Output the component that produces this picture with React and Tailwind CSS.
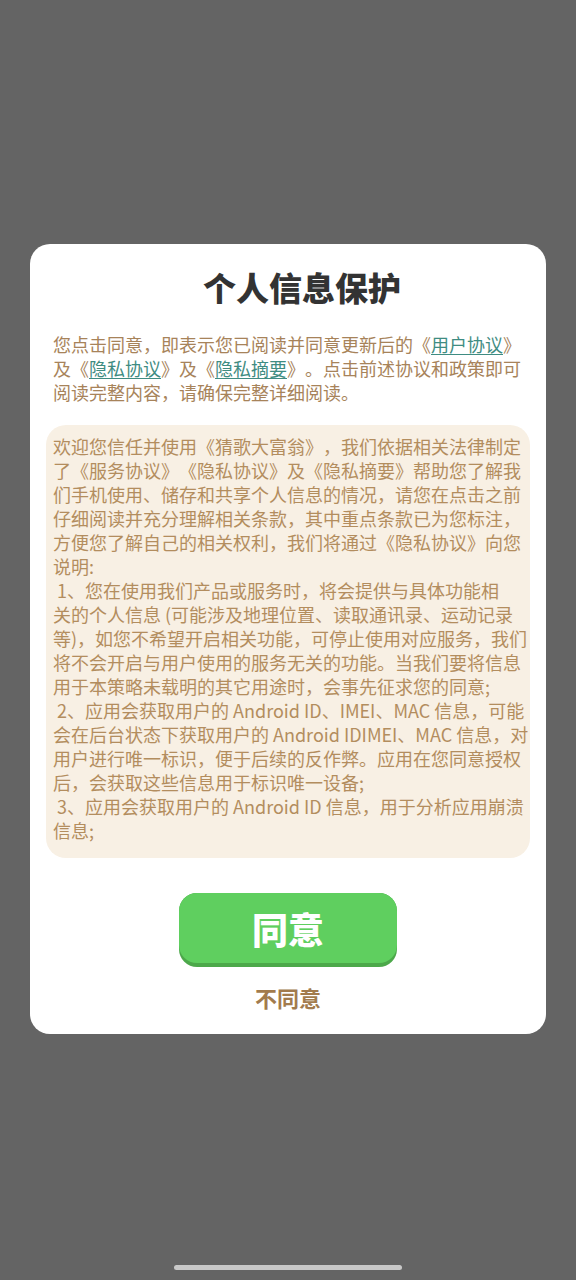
import React from 'react';

const cjk = { fontFamily: '"Noto Sans CJK SC", "Noto Sans", sans-serif' };

const policyLines = [
  '欢迎您信任并使用《猜歌大富翁》，我们依据相关法律制定',
  '了《服务协议》《隐私协议》及《隐私摘要》帮助您了解我',
  '们手机使用、储存和共享个人信息的情况，请您在点击之前',
  '仔细阅读并充分理解相关条款，其中重点条款已为您标注，',
  '方便您了解自己的相关权利，我们将通过《隐私协议》向您',
  '说明:',
  '\u00a01、您在使用我们产品或服务时，将会提供与具体功能相',
  '关的个人信息 (可能涉及地理位置、读取通讯录、运动记录',
  '等)，如您不希望开启相关功能，可停止使用对应服务，我们',
  '将不会开启与用户使用的服务无关的功能。当我们要将信息',
  '用于本策略未载明的其它用途时，会事先征求您的同意;',
  '\u00a02、应用会获取用户的 Android ID、IMEI、MAC 信息，可能',
  '会在后台状态下获取用户的 Android IDIMEI、MAC 信息，对',
  '用户进行唯一标识，便于后续的反作弊。应用在您同意授权',
  '后，会获取这些信息用于标识唯一设备;',
  '\u00a03、应用会获取用户的 Android ID 信息，用于分析应用崩溃',
  '信息;',
];

function Link({ children }) {
  return <span className="text-[#3f8c82] underline underline-offset-2">{children}</span>;
}

export default function App() {
  return (
    <div
      className="w-full min-h-[1280px] bg-[#646464] flex flex-col items-center [text-spacing-trim:space-all]"
      style={cjk}
    >
      <div className="mt-[244px] w-[516px] bg-white rounded-[20px] px-[23px] pt-[24px] pb-[22px] flex flex-col">
        <h1 className="pl-[28px] text-center text-[33px] leading-[38px] font-black text-[#333333]">个人信息保护</h1>

        <p className="mt-[26px] text-[18px] leading-[24px] text-[#a7835a] whitespace-nowrap">
          您点击同意，即表示您已阅读并同意更新后的《<Link>用户协议</Link>》
          <br />
          及《<Link>隐私协议</Link>》及《<Link>隐私摘要</Link>》。点击前述协议和政策即可
          <br />
          阅读完整内容，请确保完整详细阅读。
        </p>

        <div className="mt-[21px] mx-[-7px] bg-[#f8f0e4] rounded-[20px] px-[7px] pt-[9px] pb-[16px] text-[18px] leading-[24px] text-[#b38d5e]">
          {policyLines.map((line, i) => (
            <div key={i} className="whitespace-nowrap">{line}</div>
          ))}
        </div>

        <button className="mt-[35px] self-center w-[218px] h-[74px] rounded-[18px] bg-[#4ca84a] pb-[4px]">
          <div className="h-full rounded-[18px] bg-[#5fcf5f] flex items-center justify-center text-white text-[36px] font-black">
            同意
          </div>
        </button>

        <div className="mt-[15px] text-center text-[22px] leading-[30px] font-bold text-[#a27b4d]">不同意</div>
      </div>

      <div className="mt-auto mb-[10px] w-[228px] h-[5px] rounded-full bg-[#c8c8c8]" />
    </div>
  );
}
